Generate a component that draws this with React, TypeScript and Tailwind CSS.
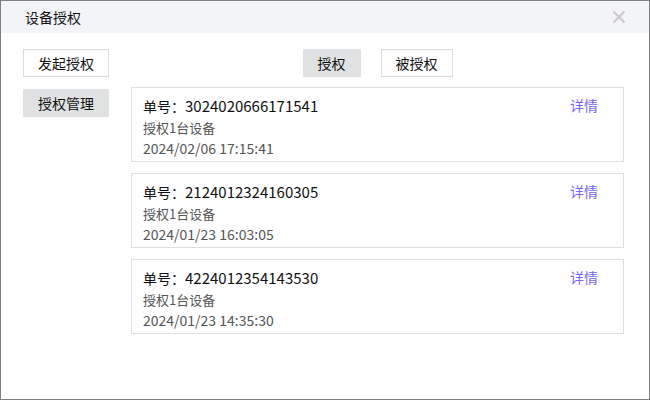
import React from "react";

const records = [
  { no: "3024020666171541", desc: "授权1台设备", time: "2024/02/06 17:15:41" },
  { no: "2124012324160305", desc: "授权1台设备", time: "2024/01/23 16:03:05" },
  { no: "4224012354143530", desc: "授权1台设备", time: "2024/01/23 14:35:30" },
];

export default function App() {
  return (
    <div
      className="w-[650px] h-[400px] border border-[#808080] bg-white flex flex-col overflow-hidden"
      style={{ fontFamily: '"Noto Sans CJK SC", "Noto Sans", sans-serif' }}
    >
      <div className="h-[32px] bg-[#f3f4f8] flex items-center justify-between pl-[24px] pr-[23px] shrink-0">
        <span className="text-[14px] text-[#111]">设备授权</span>
        <svg width="14" height="14" viewBox="0 0 14 14" className="text-[#cccccc]">
          <path d="M1.5 1.5 L12.5 12.5 M12.5 1.5 L1.5 12.5" stroke="currentColor" strokeWidth="2.2" />
        </svg>
      </div>
      <div className="flex pl-[22px] pr-[25px] pt-[16px]">
        <div className="w-[86px] flex flex-col gap-[12px] shrink-0">
          <div className="h-[28px] border border-[#dcdcdc] flex items-center justify-center text-[14px] text-[#111]">
            发起授权
          </div>
          <div className="h-[28px] bg-[#e0e1e3] flex items-center justify-center text-[14px] text-[#111]">
            授权管理
          </div>
        </div>
        <div className="flex-1 ml-[22px] flex flex-col">
          <div className="flex justify-center gap-[20px] mb-[10px]">
            <div className="w-[58px] h-[28px] bg-[#e0e1e3] flex items-center justify-center text-[14px] text-[#111]">
              授权
            </div>
            <div className="w-[72px] h-[28px] border border-[#dcdcdc] flex items-center justify-center text-[14px] text-[#111]">
              被授权
            </div>
          </div>
          <div className="flex flex-col gap-[11px]">
            {records.map((r) => (
              <div
                key={r.no}
                className="h-[75px] border border-[#dedede] pl-[11px] pr-[25px] pt-[7px] flex justify-between"
              >
                <div className="flex flex-col">
                  <div className="text-[14px] leading-[21px] text-[#111]">
                    单号：<span className="text-[15px]">{r.no}</span>
                  </div>
                  <div className="text-[13px] leading-[21px] text-[#555]">{r.desc}</div>
                  <div className="text-[14px] leading-[21px] text-[#555]">{r.time}</div>
                </div>
                <div className="text-[14px] leading-[21px] text-[#7466f2]">详情</div>
              </div>
            ))}
          </div>
        </div>
      </div>
    </div>
  );
}
